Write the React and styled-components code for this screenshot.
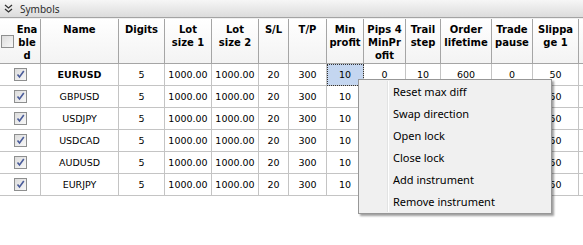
import React from "react";
import styled, { createGlobalStyle } from "styled-components";

const GlobalStyle = createGlobalStyle`
  html, body { margin: 0; padding: 0; background: #ffffff; overflow: hidden; }
  #root { width: 583px; height: 245px; }
`;

const COLS = [
  { key: "en", w: 41, label: ["Ena", "ble", "d"] },
  { key: "name", w: 78, label: ["Name"] },
  { key: "digits", w: 46, label: ["Digits"] },
  { key: "lot1", w: 47, label: ["Lot", "size 1"] },
  { key: "lot2", w: 47, label: ["Lot", "size 2"] },
  { key: "sl", w: 30, label: ["S/L"] },
  { key: "tp", w: 38, label: ["T/P"] },
  { key: "minp", w: 37, label: ["Min", "profit"] },
  { key: "pips", w: 42, label: ["Pips 4", "MinPr", "ofit"] },
  { key: "trail", w: 35, label: ["Trail", "step"] },
  { key: "life", w: 51, label: ["Order", "lifetime"] },
  { key: "pause", w: 41, label: ["Trade", "pause"] },
  { key: "slip1", w: 46, label: ["Slippa", "ge 1"] },
  { key: "slip2", w: 46, label: ["Slippa", "ge 2"] },
];

const ROWS = ["EURUSD", "GBPUSD", "USDJPY", "USDCAD", "AUDUSD", "EURJPY"];

const MENU = [
  "Reset max diff",
  "Swap direction",
  "Open lock",
  "Close lock",
  "Add instrument",
  "Remove instrument",
];

const template = COLS.map((c) => `${c.w}px`).join(" ");

const Panel = styled.div`
  position: relative;
  width: 583px;
  height: 245px;
  overflow: hidden;
  background: #ffffff;
`;

const TitleBar = styled.div`
  height: 17px;
  display: flex;
  align-items: center;
  gap: 7px;
  padding-left: 4px;
  background: linear-gradient(#f6f6f6, #dcdcdc);
  border-bottom: 1px solid #a3a3a3;
  font-family: "Noto Sans", "Liberation Sans", sans-serif;
  font-size: 10px;
  color: #2b2b2b;
`;

const Spacer = styled.div`
  height: 1px;
  background: #f0f0f0;
`;

const Grid = styled.div`
  display: grid;
  grid-template-columns: ${template};
  width: max-content;
`;

const HeadCell = styled.div`
  box-sizing: border-box;
  height: 45px;
  border-right: 1px solid #a5a5a5;
  border-bottom: 1px solid #a5a5a5;
  background: linear-gradient(#ffffff, #f3f3f3);
  display: flex;
  align-items: ${(p) => (p.$check ? "center" : "flex-start")};
  justify-content: center;
  padding-top: ${(p) => (p.$check ? "0" : "4px")};
  padding-left: ${(p) => (p.$check ? "1px" : "0")};
  font-family: "DejaVu Sans", "Liberation Sans", sans-serif;
  font-weight: bold;
  font-size: 10px;
  line-height: 13px;
  color: #000;
  text-align: center;
  white-space: nowrap;
  overflow: hidden;
`;

const HeadLabel = styled.div`
  flex: 1;
  display: flex;
  flex-direction: column;
  align-items: center;
  align-self: flex-start;
  padding-top: 4px;
`;

const Cell = styled.div`
  box-sizing: border-box;
  height: 22px;
  border-right: 1px solid #c4c4c4;
  border-bottom: 1px solid #c4c4c4;
  display: flex;
  align-items: center;
  justify-content: center;
  font-family: "DejaVu Sans", "Liberation Sans", sans-serif;
  font-size: 9.5px;
  font-weight: ${(p) => (p.$bold ? "bold" : "normal")};
  color: #000;
  white-space: nowrap;
  overflow: hidden;
  background: ${(p) => (p.$selected ? "#c4d6f0" : "transparent")};
  outline: ${(p) => (p.$selected ? "1px dotted #333" : "none")};
  outline-offset: -1px;
`;

const Box = styled.span`
  box-sizing: border-box;
  width: 13px;
  height: 13px;
  border: 1px solid #8e8f8f;
  background: linear-gradient(135deg, #dcdcdc, #f8f8f8);
  display: inline-flex;
  align-items: center;
  justify-content: center;
  flex: none;
`;

const Menu = styled.div`
  position: absolute;
  left: 358px;
  top: 79px;
  width: 194px;
  box-sizing: border-box;
  border: 1px solid #979797;
  background: #f0f0f0;
  padding: 0 0 1px 0;
  box-shadow: 2px 2px 2px rgba(0, 0, 0, 0.38);
  font-family: "Noto Sans", "Liberation Sans", sans-serif;
  font-size: 11px;
  color: #000;
`;

const Gutter = styled.div`
  position: absolute;
  left: 28px;
  top: 1px;
  bottom: 1px;
  width: 1px;
  background: #e2e3e3;
  border-right: 1px solid #ffffff;
`;

const MenuItem = styled.div`
  height: 22px;
  display: flex;
  align-items: center;
  padding-left: 34px;
`;

function ChevronIcon() {
  return (
    <svg width="9" height="9" viewBox="0 0 9 9">
      <path d="M1 1 L4.5 4 L8 1 M1 5 L4.5 8 L8 5" fill="none" stroke="#333" strokeWidth="1.3" />
    </svg>
  );
}

function CheckBox({ checked }) {
  return (
    <Box>
      {checked && (
        <svg width="9" height="9" viewBox="0 0 9 9">
          <path d="M1.5 4.5 L3.5 7 L7.8 1" fill="none" stroke="#4a5c9a" strokeWidth="1.6" />
        </svg>
      )}
    </Box>
  );
}

function rowValues(name) {
  return {
    name,
    digits: "5",
    lot1: "1000.00",
    lot2: "1000.00",
    sl: "20",
    tp: "300",
    minp: "10",
    pips: "0",
    trail: "10",
    life: "600",
    pause: "0",
    slip1: "50",
    slip2: "50",
  };
}

export default function App() {
  return (
    <Panel>
      <GlobalStyle />
      <TitleBar>
        <ChevronIcon />
        <span>Symbols</span>
      </TitleBar>
      <Spacer />
      <Grid>
        {COLS.map((c) =>
          c.key === "en" ? (
            <HeadCell key={c.key} $check>
              <CheckBox checked={false} />
              <HeadLabel>
                {c.label.map((l) => (
                  <span key={l}>{l}</span>
                ))}
              </HeadLabel>
            </HeadCell>
          ) : (
            <HeadCell key={c.key}>
              <div>
                {c.label.map((l) => (
                  <div key={l}>{l}</div>
                ))}
              </div>
            </HeadCell>
          )
        )}
        {ROWS.map((r, ri) => {
          const v = rowValues(r);
          return COLS.map((c) =>
            c.key === "en" ? (
              <Cell key={r + c.key}>
                <CheckBox checked />
              </Cell>
            ) : (
              <Cell
                key={r + c.key}
                $bold={c.key === "name" && ri === 0}
                $selected={c.key === "minp" && ri === 0}
              >
                {v[c.key]}
              </Cell>
            )
          );
        })}
      </Grid>
      <Menu>
        <Gutter />
        {MENU.map((m) => (
          <MenuItem key={m}>{m}</MenuItem>
        ))}
      </Menu>
    </Panel>
  );
}
